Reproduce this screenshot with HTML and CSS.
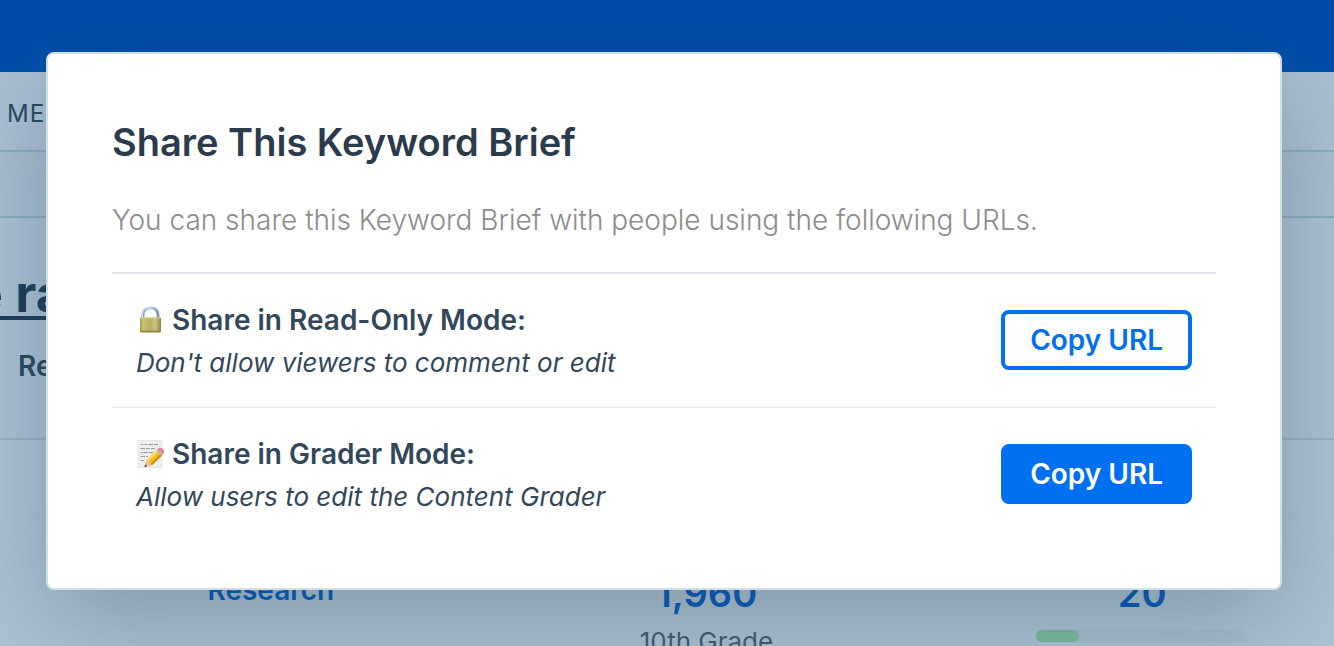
FILE: index.html
```
<!DOCTYPE html>
<html lang="en">
<head>
<meta charset="utf-8">
<title>Share This Keyword Brief</title>
<link rel="stylesheet" href="styles.css">
</head>
<body>
<div class="page">
  <header class="topbar"></header>
  <nav class="menu">MENU</nav>
  <div class="toolbar"></div>
  <section class="hero">
    <h1 class="hero-title">e rank</h1>
    <p class="hero-label">Results</p>
  </section>
  <section class="stats">
    <div class="stat"><a class="stat-link" href="#">Research</a></div>
    <div class="stat">
      <span class="stat-value">1,960</span>
      <span class="stat-note">10th Grade</span>
    </div>
    <div class="stat">
      <span class="stat-value">20</span>
      <div class="meter"><div class="meter-fill"></div></div>
    </div>
  </section>
</div>
<div class="overlay">
  <div class="modal" role="dialog" aria-modal="true" aria-labelledby="share-title">
    <h2 class="modal-title" id="share-title">Share This Keyword Brief</h2>
    <p class="modal-intro">You can share this Keyword Brief with people using the following URLs.</p>
    <ul class="share-list">
      <li class="share-row">
        <div class="share-text">
          <h3 class="share-name" id="read-only">
            <svg class="share-icon" viewBox="0 0 28 28" aria-hidden="true">
              <defs>
                <linearGradient id="brass" x1="0" x2="1" y1="0" y2="0">
                  <stop offset="0" stop-color="#a59b4d"/><stop offset=".15" stop-color="#c9c47c"/><stop offset=".45" stop-color="#b7b064"/><stop offset=".75" stop-color="#c8c27a"/><stop offset="1" stop-color="#8d853d"/>
                </linearGradient>
                <linearGradient id="steel" x1="0" x2="1" y1="0" y2="0">
                  <stop offset="0" stop-color="#8b9cae"/><stop offset=".5" stop-color="#bcd0e6"/><stop offset="1" stop-color="#8293a5"/>
                </linearGradient>
              </defs>
              <path d="M7 13V9C7 4.500 10 2 14.500 2S22 4.500 22 9V13" fill="none" stroke="url(#steel)" stroke-width="3"/>
              <path d="M6.500 13V9C6.500 4 10 1.500 14.500 1.500" fill="none" stroke="#dce9f5" stroke-width="1"/>
              <rect x="4" y="11.500" width="21" height="15" rx="1" fill="url(#brass)"/>
              <path d="M4.500 12H24.500" stroke="#dad59a" stroke-width="1"/>
              <path d="M4.500 25.500H24.500" stroke="#8a813d" stroke-width="1.500"/>
            </svg>
            Share in Read-Only Mode:
          </h3>
          <p class="share-desc">Don't allow viewers to comment or edit</p>
        </div>
        <button class="button button-outline" type="button" aria-describedby="read-only">Copy URL</button>
      </li>
      <li class="share-row">
        <div class="share-text">
          <h3 class="share-name" id="grader">
            <svg class="share-icon" viewBox="0 0 28 28" aria-hidden="true">
              <rect x="2" y="0.500" width="24" height="27" fill="#eeeeee" stroke="#dddddd" stroke-width=".6"/>
              <path d="M4.500 4.500H7.500M8.500 4.500H11M12 4.500H17M18 4.500H22M4.500 8.500H9M10 8.500H14M15 8.500H19M4.500 12.500H6.500M7.500 12.500H12M13 12.500H17M4.500 16.500H9M10 16.500H12M4.500 20.500H8" stroke="#9a9a9a" stroke-width="1.200"/>
              <path d="M8.500 27L10.500 20L16 25.200Z" fill="#e8c48c"/>
              <path d="M8.500 27L9.200 24.500L11.200 26.300Z" fill="#383431"/>
              <path d="M10.500 20L20.500 10.300L26 15.500L16 25.200Z" fill="#f5b829"/>
              <path d="M10.500 20L20.500 10.300L22.300 12L12.300 21.700Z" fill="#ffdb58"/>
              <path d="M14.400 23.700L24.400 14L26 15.500L16 25.200Z" fill="#d18a1b"/>
              <path d="M20.500 10.300L21.900 8.900L27.400 14.100L26 15.500Z" fill="#a7b3bc"/>
              <path d="M21.900 8.900L22.900 8.100C25.500 6.600 29.300 10.400 28 13.300L27.400 14.100Z" fill="#e7808a"/>
            </svg>
            Share in Grader Mode:
          </h3>
          <p class="share-desc">Allow users to edit the Content Grader</p>
        </div>
        <button class="button button-solid" type="button" aria-describedby="grader">Copy URL</button>
      </li>
    </ul>
  </div>
</div>
</body>
</html>
```
FILE: styles.css
```
* { box-sizing: border-box; }
body {
  margin: 0;
  background: #abc3d2;
  color: #33475b;
  font-family: Inter, "Liberation Sans", sans-serif;
}
h1, h2, h3, p, ul { margin: 0; padding: 0; }

.page { height: 100vh; overflow: hidden; }
.topbar { height: 72px; background: #004dab; }
.menu {
  height: 80px;
  padding-left: 7px;
  border-bottom: 2px solid #8eadc1;
  background: #abc1d4;
  color: #264860;
  font-size: 24px;
  line-height: 84px;
  letter-spacing: 1px;
}
.toolbar {
  height: 66px;
  border-bottom: 2px solid #8eadc1;
  background: #a8bfd1;
}
.hero {
  height: 222px;
  padding-top: 44px;
  border-bottom: 2px solid #9bb1c1;
  background: #abc2d3;
  white-space: nowrap;
}
.hero-title {
  margin-left: -28px;
  color: #1d3d58;
  font-size: 52px;
  font-weight: 700;
  line-height: 64px;
  text-decoration: underline;
  text-decoration-thickness: 4px;
  text-underline-offset: 4px;
}
.hero-label {
  margin-top: 24px;
  padding-left: 18px;
  color: #264860;
  font-size: 28px;
  font-weight: 600;
  line-height: 32px;
}
.stats {
  display: grid;
  grid-template-columns: repeat(3, 1fr);
  margin: 0 -26px 0 53px;
  padding-top: 130px;
}
.stat {
  display: flex;
  flex-direction: column;
  align-items: center;
}
.stat-link {
  color: #0057b8;
  font-size: 28px;
  font-weight: 600;
  line-height: 40px;
  text-decoration: none;
}
.stat-value {
  color: #0057b8;
  font-size: 38px;
  font-weight: 600;
  line-height: 46px;
}
.stat-note {
  margin-top: 10px;
  color: #3f5c72;
  font-size: 26px;
  line-height: 32px;
}
.meter {
  width: 212px;
  height: 12px;
  margin-top: 14px;
  border-radius: 6px;
  background: #a7bdcc;
}
.meter-fill {
  width: 20%;
  height: 100%;
  border-radius: 6px;
  background: #78bb99;
}

.overlay {
  position: absolute;
  inset: 0;
  padding: 52px 52px 0 46px;
  overflow: hidden;
}
.modal {
  padding: 64px 64px 48px;
  border: 2px solid #d1dfe6;
  border-radius: 8px;
  background: #ffffff;
  box-shadow: 0 30px 100px rgba(51, 71, 91, 0.34);
}
.modal-title {
  color: #2b3b4b;
  font-size: 38px;
  font-weight: 600;
  line-height: 48px;
}
.modal-intro {
  margin-top: 32px;
  padding-bottom: 30px;
  border-bottom: 2px solid #e3e4e9;
  color: #8c8c8c;
  font-size: 28px;
  font-weight: 300;
  line-height: 44px;
}
.share-list { list-style: none; }
.share-row {
  display: flex;
  align-items: center;
  justify-content: space-between;
  padding: 22px 24px;
}
.share-row + .share-row { border-top: 2px solid #f0f1f5; }
.share-text { padding-top: 2px; }
.share-name {
  display: flex;
  align-items: center;
  gap: 8px;
  font-size: 28px;
  font-weight: 600;
  line-height: 44px;
}
.share-icon { width: 28px; height: 28px; }
.share-desc {
  font-size: 26px;
  font-style: italic;
  line-height: 42px;
}
.button {
  height: 60px;
  padding: 0 25px;
  border: 4px solid #0070f0;
  border-radius: 8px;
  font-family: inherit;
  font-size: 28px;
  font-weight: 600;
  cursor: pointer;
}
.button-outline { background: #ffffff; color: #0070f0; }
.button-solid { background: #0070f0; color: #ffffff; }
```
